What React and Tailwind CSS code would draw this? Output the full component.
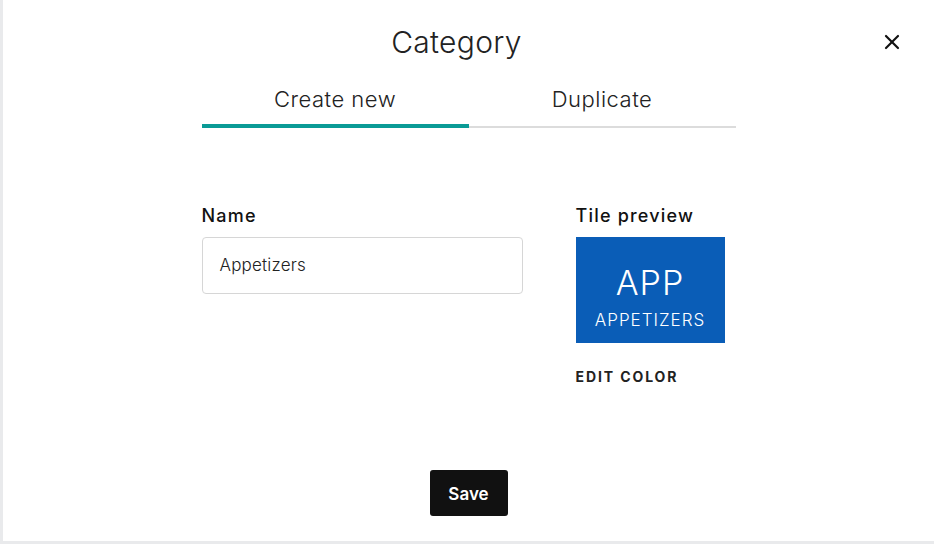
import { X } from "lucide-react";

const App = () => {
  return (
    <div className="w-[934px] h-[544px] bg-[#e9eaec] pl-[3px] pb-[3px] font-['Inter','Noto_Sans',sans-serif] text-[#111]">
      <div className="relative h-full bg-white flex flex-col items-center">
        {/* Close */}
        <button className="absolute right-[30px] top-[30px] text-[#111]">
          <X size={24} strokeWidth={2.2} />
        </button>

        {/* Title */}
        <h1 className="mt-[22px] mr-[24px] text-[30px] leading-[40px] font-light text-[#222] tracking-[0.3px]">Category</h1>

        {/* Tabs */}
        <div className="mt-[23px] w-[534px] flex">
          <div className="w-1/2 flex flex-col items-center">
            <span className="text-[22px] leading-[28px] font-light text-[#222] tracking-[0.5px]">Create new</span>
            <div className="mt-[11px] h-[4px] w-full bg-[#0a9b96]" />
          </div>
          <div className="w-1/2 flex flex-col items-center">
            <span className="text-[22px] leading-[28px] font-light text-[#222] tracking-[0.5px]">Duplicate</span>
            <div className="mt-[13px] h-[2px] w-full bg-[#dcdcdc]" />
          </div>
        </div>

        {/* Body */}
        <div className="mt-[76px] w-[534px] flex justify-between">
          <div className="flex flex-col w-[321px]">
            <label className="text-[18px] leading-[24px] font-medium tracking-[1.2px] text-[#111]">Name</label>
            <div className="mt-[9px] h-[57px] rounded-[4px] border border-[#d6d6d6] flex items-center px-[17px]">
              <span className="text-[17px] font-light text-[#222] tracking-[0.2px]">Appetizers</span>
            </div>
          </div>
          <div className="flex flex-col w-[160px]">
            <span className="text-[18px] leading-[24px] font-medium tracking-[1.2px] text-[#111]">Tile preview</span>
            <div className="mt-[9px] w-[149px] h-[106px] bg-[#0a5db7] flex flex-col items-center pt-[26px] text-white">
              <span className="text-[34px] leading-[40px] font-light tracking-[1px]">APP</span>
              <span className="text-[17px] leading-[22px] font-light tracking-[1px] mt-[6px]">APPETIZERS</span>
            </div>
            <span className="mt-[25px] text-[14px] leading-[18px] font-bold tracking-[1.9px] text-[#222]">EDIT COLOR</span>
          </div>
        </div>

        {/* Save */}
        <button className="mt-auto mb-[25px] w-[78px] h-[46px] pt-[3px] rounded-[3px] bg-[#111] text-white text-[17px] font-semibold">
          Save
        </button>
      </div>
    </div>
  );
};

export default App;
